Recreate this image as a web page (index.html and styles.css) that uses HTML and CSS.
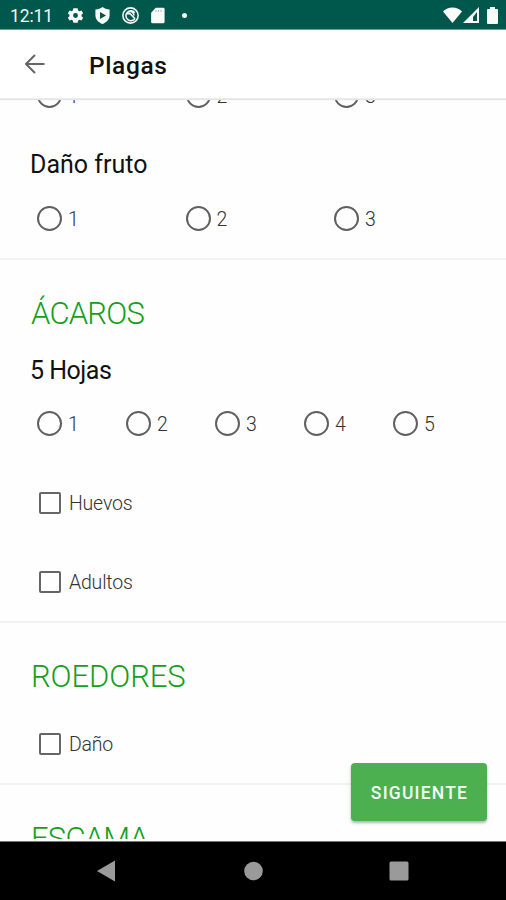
FILE: index.html
```html
<!DOCTYPE html>
<html lang="es">
<head>
  <meta charset="UTF-8" />
  <title>Plagas</title>
  <link rel="stylesheet" href="styles.css">
</head>
<body>

  <div class="status-bar">
    <span class="clock">12:11</span>
    <svg class="st-icon" viewBox="0 0 24 24"><path fill-rule="evenodd" d="M20.500 13.200c.1-.8.1-1.600 0-2.400l2.300-1.800-2.400-4.200-2.800 1.100c-.6-.5-1.200-.8-1.900-1.100L15 1.800H9l-.7 3c-.7.300-1.300.600-1.900 1.100L3.600 4.800 1.200 9l2.300 1.800c-.1.800-.1 1.600 0 2.400L1.200 15l2.400 4.200 2.800-1.100c.6.500 1.200.8 1.900 1.100l.7 3h6l.7-3c.7-.3 1.300-.6 1.900-1.100l2.800 1.100 2.400-4.200zM12 8.600a3.400 3.400 0 1 1 0 6.800 3.400 3.400 0 0 1 0-6.800z"/></svg>
    <svg class="st-icon" viewBox="0 0 24 24"><path fill-rule="evenodd" d="M12 0C9 2 6 3.500 2 3.500V12c0 5.500 4.500 10 10 12 5.500-2 10-6.500 10-12V3.500C18 3.500 15 2 12 0zM8.500 7l8.500 5-8.500 5z"/></svg>
    <svg class="st-icon line" viewBox="0 0 24 24"><circle cx="12" cy="12" r="10.800"/><path d="M18.500 16A7 7 0 1 1 18 8M6.500 9l5 .5 6.500 6.500M9 7c4-2 8 1 8 5"/></svg>
    <svg class="st-icon" viewBox="0 0 24 24"><path d="M20 1H9.500L3 8v13a2 2 0 0 0 2 2h15a2 2 0 0 0 2-2V3a2 2 0 0 0-2-2z"/><path class="slot" d="M10 4v3M13.500 4v3M17 4v3"/></svg>
    <span class="dot"></span>
    <svg class="wifi" viewBox="0 0 19 16"><path d="M0 4.500C5-1 14-1 19 4.500L9.500 16z"/></svg>
    <svg class="signal" viewBox="0 0 16 16"><path fill-rule="evenodd" d="M16 0v16H0zM14 5l-4 5v4h4z"/></svg>
    <svg class="battery" viewBox="0 0 11 17"><path d="M3 0h5v2h2a1 1 0 0 1 1 1v13a1 1 0 0 1-1 1H1a1 1 0 0 1-1-1V3a1 1 0 0 1 1-1h2z"/></svg>
  </div>

  <div class="app-bar">
    <svg class="back" viewBox="0 0 20 20"><path d="M19.500 10H1.500M10 1L1 10l9 9"/></svg>
    <h1>Plagas</h1>
  </div>

  <div class="content">
    <div class="section first">
      <div class="options three">
        <label><span class="radio"></span>1</label>
        <label><span class="radio"></span>2</label>
        <label><span class="radio"></span>3</label>
      </div>
      <h3>Daño fruto</h3>
      <div class="options three">
        <label><span class="radio"></span>1</label>
        <label><span class="radio"></span>2</label>
        <label><span class="radio"></span>3</label>
      </div>
    </div>

    <div class="section">
      <h2 class="tight">ÁCAROS</h2>
      <h3 class="hojas">5 Hojas</h3>
      <div class="options">
        <label><span class="radio"></span>1</label>
        <label><span class="radio"></span>2</label>
        <label><span class="radio"></span>3</label>
        <label><span class="radio"></span>4</label>
        <label><span class="radio"></span>5</label>
      </div>
      <div class="options">
        <label><span class="check"></span>Huevos</label>
      </div>
      <div class="options">
        <label><span class="check"></span>Adultos</label>
      </div>
    </div>

    <div class="section">
      <h2 class="roedores">ROEDORES</h2>
      <div class="options">
        <label><span class="check"></span>Daño</label>
      </div>
    </div>

    <div class="section">
      <h2 class="tight">ESCAMA</h2>
    </div>
  </div>

  <button class="next">SIGUIENTE</button>

  <div class="nav-bar">
    <svg viewBox="0 0 20 22"><path d="M18 .5v21L0 11z"/></svg>
    <svg viewBox="0 0 20 22"><circle cx="10.500" cy="11" r="9.300"/></svg>
    <svg viewBox="0 0 20 22"><rect x=".5" y="1.500" width="19" height="19" rx="1.500"/></svg>
  </div>

</body>
</html>
```
FILE: styles.css
```css
* {
  box-sizing: border-box;
}
body {
  margin: 0;
  height: 900px;
  display: flex;
  flex-direction: column;
  position: relative;
  overflow: hidden;
  font-family: Roboto, "Liberation Sans", sans-serif;
  background-color: #fefefe;
  color: #111;
}
h1, h2, h3 {
  margin: 0;
}
.status-bar {
  height: 30px;
  flex: none;
  display: flex;
  align-items: center;
  padding: 1px 8px 0 10px;
  background-color: #00574b;
  border-bottom: 1px solid #6f9a93;
  color: #f4f8f7;
  fill: #f8fbfa;
}
.clock {
  width: 57px;
  padding-top: 1px;
  font-size: 17.5px;
  letter-spacing: -0.1px;
}
.st-icon {
  width: 17px;
  height: 17px;
  margin-right: 10.300px;
}
.line {
  fill: none;
  stroke: #f0f6f5;
  stroke-width: 2.200;
}
.slot {
  stroke: #8fb5af;
  stroke-width: 1.200;
}
.dot {
  width: 5px;
  height: 5px;
  margin-left: 6px;
  border-radius: 50%;
  background-color: #f4f8f7;
}
.wifi {
  width: 19px;
  height: 16px;
  margin-left: auto;
}
.signal {
  width: 16px;
  height: 16px;
  margin: 0 8px 0 1px;
}
.battery {
  width: 11px;
  height: 17px;
}
.app-bar {
  height: 69px;
  flex: none;
  display: flex;
  align-items: center;
  padding-left: 25px;
  background-color: #fff;
  border-bottom: 1px solid #ececec;
  box-shadow: 0 1px 1px #e4e4e4;
  z-index: 1;
}
.back {
  width: 20px;
  height: 20px;
  margin: 0 44px 0 0;
  fill: none;
  stroke: #666;
  stroke-width: 2;
}
.app-bar h1 {
  padding-top: 2px;
  font-size: 24.5px;
  font-weight: 500;
  letter-spacing: 0.600px;
}
.content {
  height: 740px;
  flex: none;
  overflow: hidden;
}
.section {
  border-bottom: 2px solid #f2f2f2;
}
/* list is scrolled a little, the first row sits under the app bar */
.first {
  margin-top: -43px;
}
.section h2 {
  height: 80px;
  padding: 27px 0 0 31px;
  font-size: 31px;
  line-height: 53px;
  font-weight: 300;
  color: #14a01c;
}
.section .tight {
  letter-spacing: -0.800px;
}
.section .roedores {
  height: 81px;
  letter-spacing: -0.1px;
}
.section h3 {
  height: 44px;
  padding-left: 30px;
  font-size: 25px;
  line-height: 60px;
  font-weight: 400;
}
.section .hojas {
  line-height: 61px;
  letter-spacing: -0.5px;
}
.options {
  height: 79px;
  display: flex;
  align-items: center;
  padding-left: 37px;
}
.options label {
  width: 89px;
  display: flex;
  align-items: center;
  padding-top: 2px;
  font-size: 19.5px;
  line-height: 25px;
  font-weight: 300;
  letter-spacing: -0.2px;
  color: #333;
}
.three label {
  width: 148.500px;
}
.radio {
  width: 25px;
  height: 25px;
  flex: none;
  margin: -2px 6px 0 0;
  border: 2px solid #606060;
  border-radius: 50%;
}
.check {
  width: 22px;
  height: 22px;
  flex: none;
  margin: -2px 8px 0 2px;
  border: 2px solid #666;
  border-radius: 2px;
}
.next {
  position: absolute;
  left: 351px;
  top: 763px;
  width: 136px;
  height: 58px;
  padding: 2px 0 0 1px;
  border: none;
  border-radius: 4px;
  background-color: #4caf50;
  box-shadow: 0 2px 3px rgba(0, 0, 0, 0.3);
  color: #f4fff4;
  font-family: inherit;
  font-size: 17.5px;
  font-weight: 500;
  letter-spacing: 1.200px;
}
.nav-bar {
  height: 59px;
  margin-top: auto;
  flex: none;
  display: flex;
  align-items: center;
  justify-content: space-between;
  padding: 0 97px 0 97px;
  background-color: #000;
  border-top: 1px solid #777;
  fill: #9a9a9a;
}
.nav-bar svg {
  width: 20px;
  height: 22px;
}
```
